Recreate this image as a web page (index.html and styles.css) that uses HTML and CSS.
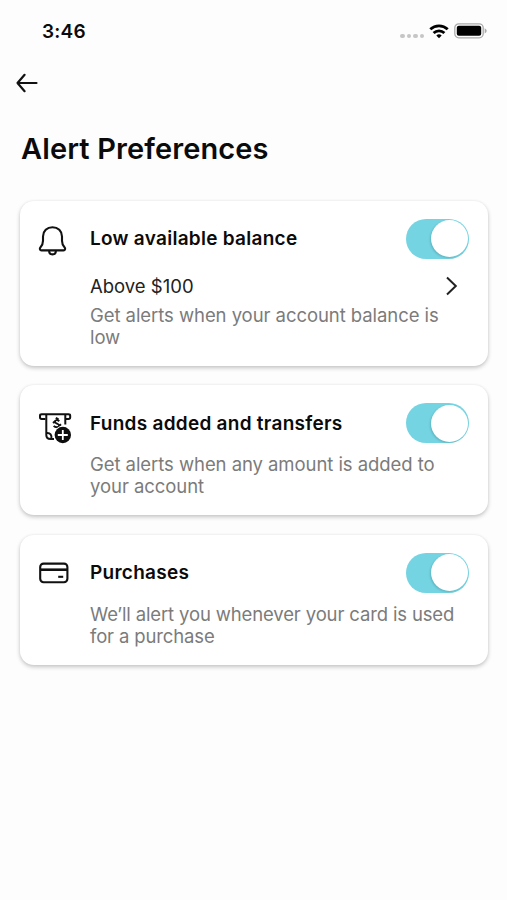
FILE: index.html
```html
<!DOCTYPE html>
<html lang="en">
<head>
<meta charset="utf-8">
<title>Alert Preferences</title>
<link rel="stylesheet" href="styles.css">
</head>
<body>
<header class="status">
  <span class="time">3:46</span>
  <div class="indicators">
    <span class="signal"><i></i><i></i><i></i><i></i></span>
    <svg class="wifi" width="20" height="15" viewBox="0 0 20 15" fill="none" stroke="#000" stroke-width="2.8"><path d="M1.3 5.3a12.6 12.6 0 0 1 17.400 0"/><path d="M4.600 9a7.800 7.800 0 0 1 10.800 0"/><path d="M10 14.200 7.300 11.600a4 4 0 0 1 5.400 0z" fill="#000" stroke="none"/></svg>
    <svg class="battery" width="33" height="16" viewBox="0 0 33 16"><rect x=".8" y=".8" width="28.400" height="14" rx="4" fill="none" stroke="#aaa" stroke-width="1.300"/><rect x="2.800" y="2.800" width="24.400" height="10" rx="2" fill="#000"/><path d="M30.700 5.200q2 1 2 2.600t-2 2.600z" fill="#aaa"/></svg>
  </div>
</header>
<nav class="nav">
  <svg width="22" height="20" viewBox="0 0 22 20" fill="none" stroke="#111" stroke-width="2.2" stroke-linecap="round" stroke-linejoin="round"><path d="M20.500 10H1.500M8.600 1.800 1.500 10l7.100 8.200"/></svg>
</nav>
<h1 class="title">Alert Preferences</h1>
<main class="cards">
  <section class="card">
    <div class="head">
      <svg class="icon bell" width="34" height="34" viewBox="0 0 34 34" fill="none" stroke="#111" stroke-width="2.1" stroke-linejoin="round"><path d="M14.500 4.200c-5.500 0-9.500 4-9.500 9.300v4.300c0 2.800-.8 4.600-2.500 6.400-1.200 1.300-.7 3.200 1 3.200h22c1.700 0 2.200-1.900 1-3.200-1.700-1.800-2.500-3.600-2.500-6.400v-4.300c0-5.300-4-9.300-9.500-9.300z"/><path d="M11.100 27.400c0 2.400 1.500 4 3.400 4s3.400-1.600 3.400-4"/></svg>
      <h2 class="name">Low available balance</h2>
      <span class="toggle"></span>
    </div>
    <div class="option">
      <span>Above $100</span>
      <svg width="14" height="20" viewBox="0 0 14 20" fill="none" stroke="#222" stroke-width="2"><path d="m2 1.500 8.800 8.500L2 18.500"/></svg>
    </div>
    <p class="desc">Get alerts when your account balance is<br>low</p>
  </section>
  <section class="card short">
    <div class="head">
      <svg class="icon funds" width="34" height="34" viewBox="0 0 34 34" fill="none" stroke="#111" stroke-width="2" stroke-linejoin="round"><path d="M7.500 8H3.700Q2 8 2 6.300V4.700Q2 3.300 3.700 3.300H30.500Q32.200 3.300 32.200 4.700V6.300Q32.200 8 30.500 8H27.500"/><path d="M8.300 3.500V24c0 3 2 4 4.200 4H16M27.300 3.500v10"/><path d="M8.500 22c3.800-.5 5.600 2.300 4.800 6"/><path d="M21.200 10.200c-1.500-1.600-4.100-1.400-4.300.4-.2 2.100 4.600 1.900 4.300 4.100-.3 2-3.700 2.200-5.500.2M15 12l2-1.700M21 15l2-1.700M17.800 6.800l2.700 1.500" stroke-width="2"/><circle cx="24.800" cy="24" r="9.200" fill="#fff" stroke="none"/><circle cx="24.800" cy="24" r="8.200" fill="#0d0d0d" stroke="none"/><path d="M19.800 24h10M24.800 19v10" stroke="#fff" stroke-width="1.800"/></svg>
      <h2 class="name">Funds added and transfers</h2>
      <span class="toggle"></span>
    </div>
    <p class="desc">Get alerts when any amount is added to<br>your account</p>
  </section>
  <section class="card short">
    <div class="head">
      <svg class="icon" width="34" height="34" viewBox="0 0 34 34" fill="none" stroke="#111" stroke-width="2.1"><rect x="2.200" y="7.600" width="27.200" height="18.600" rx="3.400"/><path d="M2 13.700h27.500" stroke-width="2.600"/><path d="M20.200 20.800h5"/></svg>
      <h2 class="name">Purchases</h2>
      <span class="toggle"></span>
    </div>
    <p class="desc tight">We’ll alert you whenever your card is used<br>for a purchase</p>
  </section>
</main>
</body>
</html>
```

FILE: styles.css
```css
* { box-sizing: border-box; }
body {
  margin: 0;
  height: 900px;
  overflow: hidden;
  background: #fdfdfd;
  color: #0b0b0b;
  font-family: Inter, "Liberation Sans", sans-serif;
}
.status {
  height: 62px;
  padding: 0 20px 0 42px;
  display: flex;
  align-items: center;
  justify-content: space-between;
}
.time { font-size: 19px; font-weight: 600; letter-spacing: .2px; }
.indicators { display: flex; align-items: center; }
.signal { display: flex; gap: 2px; margin: 10px 5px 0 0; }
.signal i { width: 4.500px; height: 4.500px; border-radius: 2px; background: #c6c6c6; }
.wifi { margin-right: 5px; }
.nav { height: 42px; padding: 0 16px; display: flex; align-items: center; }
.title {
  margin: 0;
  padding: 0 21px;
  height: 96.500px;
  line-height: 90px;
  font-size: 29px;
  font-weight: 600;
  letter-spacing: .12px;
}
.cards { display: flex; flex-direction: column; gap: 19.500px; padding: 0 19px 0 20px; }
.card {
  height: 165px;
  padding: 18px 19px 0 18px;
  border-radius: 14px;
  background: #fff;
  box-shadow: 0 2px 4px rgba(0, 0, 0, .22), 0 0 3px rgba(0, 0, 0, .05);
}
.short { height: 130px; }
.head { display: flex; align-items: center; height: 40px; }
.icon { flex: none; margin-right: 18px; }
.bell { margin-top: 3px; }
.funds { margin-top: 9px; }
.name {
  margin: 0;
  flex: 1;
  font-size: 19px;
  font-weight: 600;
  letter-spacing: .27px;
  white-space: nowrap;
}
.toggle {
  width: 63px;
  height: 40px;
  padding: 1.500px;
  border-radius: 20px;
  background: #75d4e2;
  display: flex;
  justify-content: flex-end;
}
.toggle::before {
  content: "";
  width: 37px;
  height: 37px;
  border-radius: 50%;
  background: #fff;
  box-shadow: -1px 1px 2px rgba(0, 60, 70, .2);
}
.option {
  height: 30px;
  margin: 12px 10px 0 52px;
  display: flex;
  align-items: center;
  justify-content: space-between;
  font-size: 18.500px;
  color: #222;
}
.desc {
  margin: 3px 0 0 52px;
  font-size: 18.500px;
  line-height: 22px;
  letter-spacing: -.06px;
  color: #7b7b7b;
  white-space: nowrap;
}
.tight { letter-spacing: -.14px; }
.short .desc { margin-top: 10px; }
```
